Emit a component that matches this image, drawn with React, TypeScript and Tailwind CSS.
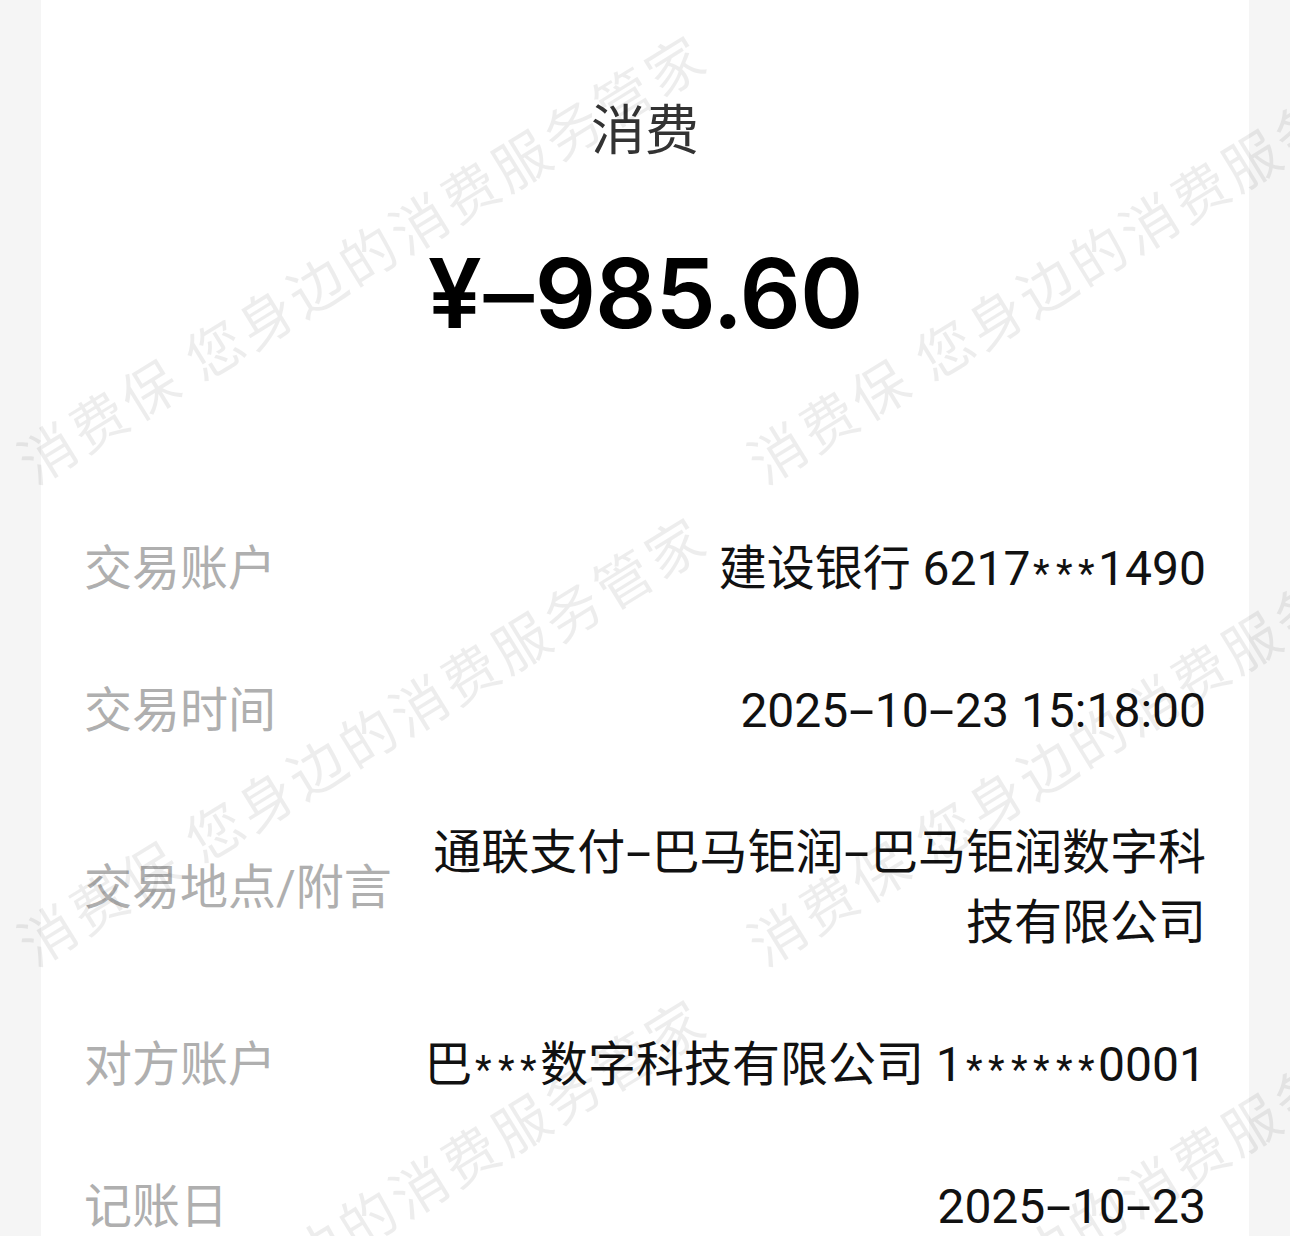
import React from "react";

const VALUE_FONT = "font-['Roboto','Noto_Sans_CJK_SC',sans-serif]";

function styled(text: string, dashCls: string, scaleCls: string) {
  const out: React.ReactNode[] = [];
  let buf = "";
  let k = 0;
  const flush = () => {
    if (buf) {
      out.push(<React.Fragment key={`t${k++}`}>{buf}</React.Fragment>);
      buf = "";
    }
  };
  for (const ch of text) {
    if (ch === "-") {
      flush();
      out.push(
        <span key={`d${k++}`} className={dashCls}>
          <span className={scaleCls}>-</span>
        </span>
      );
    } else if (ch === "*") {
      flush();
      out.push(
        <span key={`s${k++}`} className="inline-block w-[0.47em] text-center">
          <span className="inline-block translate-y-[5px] scale-[0.8]">*</span>
        </span>
      );
    } else {
      buf += ch;
    }
  }
  flush();
  return out;
}

const rows: { label: string; value: string }[] = [
  { label: "交易账户", value: "建设银行 6217***1490" },
  { label: "交易时间", value: "2025-10-23 15:18:00" },
  { label: "交易地点/附言", value: "通联支付-巴马钜润-巴马钜润数字科技有限公司" },
  { label: "对方账户", value: "巴***数字科技有限公司 1******0001" },
  { label: "记账日", value: "2025-10-23" },
];

const WM = "消费保 您身边的消费服务管家";

export default function App() {
  return (
    <div className="relative h-[1236px] w-full overflow-hidden bg-[#f5f5f5]">
      <div className="mx-[41px] flex min-h-full flex-col bg-white px-[43px] pt-[89px]">
        <div className="text-center font-['Noto_Sans_CJK_SC',sans-serif] text-[54px] leading-[76px] text-[#333333]">
          消费
        </div>
        <div className="mt-[68px] text-center font-['Inter','Noto_Sans_CJK_SC',sans-serif] text-[96px] font-semibold leading-[120px] tracking-[-1px] text-black">
          {styled("¥-985.60", "inline-block w-[0.56em] text-center", "inline-block scale-x-[1.6] scale-y-[0.85]")}
        </div>
        <div className="mt-[181px] flex flex-col gap-[72px]">
          {rows.map((r) => (
            <div key={r.label} className={`flex items-center justify-between gap-[36px] ${VALUE_FONT} text-[48px] leading-[70px]`}>
              <div className="shrink-0 whitespace-nowrap text-[#afafaf]">{r.label}</div>
              <div className="min-w-0 flex-1 text-right text-[#111111]">
                {styled(r.value, "inline-block w-[0.55em] text-center", "inline-block scale-x-[1.9]")}
              </div>
            </div>
          ))}
        </div>
      </div>

      <div className="pointer-events-none absolute inset-0 overflow-hidden font-['Noto_Sans_CJK_SC',sans-serif] text-[56px] tracking-[4px] text-black/[0.07]">
        <span className="absolute left-[361px] top-[256px] -translate-x-1/2 -translate-y-1/2 -rotate-[31.7deg] whitespace-nowrap">{WM}</span>
        <span className="absolute left-[1091px] top-[256px] -translate-x-1/2 -translate-y-1/2 -rotate-[31.7deg] whitespace-nowrap">{WM}</span>
        <span className="absolute left-[361px] top-[738px] -translate-x-1/2 -translate-y-1/2 -rotate-[31.7deg] whitespace-nowrap">{WM}</span>
        <span className="absolute left-[1091px] top-[738px] -translate-x-1/2 -translate-y-1/2 -rotate-[31.7deg] whitespace-nowrap">{WM}</span>
        <span className="absolute left-[361px] top-[1220px] -translate-x-1/2 -translate-y-1/2 -rotate-[31.7deg] whitespace-nowrap">{WM}</span>
        <span className="absolute left-[1091px] top-[1220px] -translate-x-1/2 -translate-y-1/2 -rotate-[31.7deg] whitespace-nowrap">{WM}</span>
      </div>
    </div>
  );
}
